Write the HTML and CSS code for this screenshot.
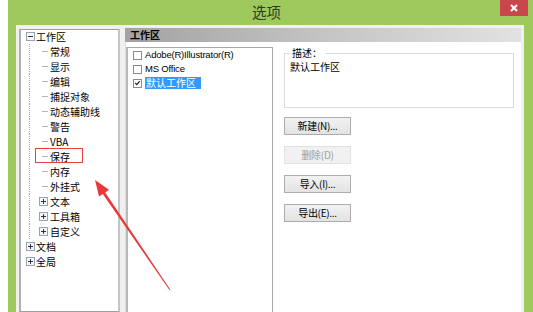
FILE: index.html
```html
<!DOCTYPE html>
<html>
<head>
<meta charset="utf-8">
<link rel="stylesheet" href="styles.css">
</head>
<body>
<div class="win">
  <div class="titlebar">
    <div class="title">选项</div>
    <div class="close"><svg width="10" height="10" viewBox="0 0 10 10"><path d="M2 2L8 8M8 2L2 8" stroke="#fff" stroke-width="2"/></svg></div>
  </div>
  <div class="content">
    <div class="tree">
      <div class="row root first"><span class="exp"><svg width="9" height="9" viewBox="0 0 9 9"><rect x="0.5" y="0.5" width="8" height="8" fill="#f4f6f9" stroke="#98a4b4"/><path d="M2 4.5H7" stroke="#333"/></svg></span><span class="t">工作区</span></div>
      <div class="row child"><span class="v"></span><span class="dash"></span><span class="t">常规</span></div>
      <div class="row child"><span class="v"></span><span class="dash"></span><span class="t">显示</span></div>
      <div class="row child"><span class="v"></span><span class="dash"></span><span class="t">编辑</span></div>
      <div class="row child"><span class="v"></span><span class="dash"></span><span class="t">捕捉对象</span></div>
      <div class="row child"><span class="v"></span><span class="dash"></span><span class="t">动态辅助线</span></div>
      <div class="row child"><span class="v"></span><span class="dash"></span><span class="t">警告</span></div>
      <div class="row child"><span class="v"></span><span class="dash"></span><span class="t">VBA</span></div>
      <div class="row child"><span class="v"></span><span class="dash"></span><span class="t">保存</span></div>
      <div class="row child"><span class="v"></span><span class="dash"></span><span class="t">内存</span></div>
      <div class="row child"><span class="v"></span><span class="dash"></span><span class="t">外挂式</span></div>
      <div class="row child"><span class="v"></span><span class="exp sub"><svg width="9" height="9" viewBox="0 0 9 9"><rect x="0.5" y="0.5" width="8" height="8" fill="#f4f6f9" stroke="#98a4b4"/><path d="M2 4.5H7M4.5 2V7" stroke="#333"/></svg></span><span class="t">文本</span></div>
      <div class="row child"><span class="v"></span><span class="exp sub"><svg width="9" height="9" viewBox="0 0 9 9"><rect x="0.5" y="0.5" width="8" height="8" fill="#f4f6f9" stroke="#98a4b4"/><path d="M2 4.5H7M4.5 2V7" stroke="#333"/></svg></span><span class="t">工具箱</span></div>
      <div class="row child"><span class="v"></span><span class="exp sub"><svg width="9" height="9" viewBox="0 0 9 9"><rect x="0.5" y="0.5" width="8" height="8" fill="#f4f6f9" stroke="#98a4b4"/><path d="M2 4.5H7M4.5 2V7" stroke="#333"/></svg></span><span class="t">自定义</span></div>
      <div class="row root"><span class="exp"><svg width="9" height="9" viewBox="0 0 9 9"><rect x="0.5" y="0.5" width="8" height="8" fill="#f4f6f9" stroke="#98a4b4"/><path d="M2 4.5H7M4.5 2V7" stroke="#333"/></svg></span><span class="t">文档</span></div>
      <div class="row root"><span class="exp"><svg width="9" height="9" viewBox="0 0 9 9"><rect x="0.5" y="0.5" width="8" height="8" fill="#f4f6f9" stroke="#98a4b4"/><path d="M2 4.5H7M4.5 2V7" stroke="#333"/></svg></span><span class="t">全局</span></div>
    </div>
    <div class="panel">
      <div class="phead">工作区</div>
      <div class="pbody">
        <div class="listbox">
          <div class="item"><span class="cb"></span><span class="lt">Adobe(R)Illustrator(R)</span></div>
          <div class="item"><span class="cb"></span><span class="lt">MS Office</span></div>
          <div class="item"><span class="cb"><svg width="8" height="8" viewBox="0 0 8 8"><path d="M1.5 4L3.2 5.8L6.5 1.8" stroke="#222" stroke-width="1.4" fill="none"/></svg></span><span class="lt sel">默认工作区</span></div>
        </div>
        <div class="side">
          <fieldset class="desc">
            <legend>描述：</legend>
            <div class="dtext">默认工作区</div>
          </fieldset>
          <div class="btns">
            <div class="btn">新建(N)...</div>
            <div class="btn off">删除(D)</div>
            <div class="btn">导入(I)...</div>
            <div class="btn">导出(E)...</div>
          </div>
        </div>
      </div>
    </div>
  </div>
</div>
<div class="mark"></div>
<svg class="arrow" width="533" height="312" viewBox="0 0 533 312"><polygon points="95,180 109,189.8 105.2,192.4 170.4,289.7 169.6,290.3 102.8,194.1 99,196.6" fill="#e8393a"/></svg>
</body>
</html>
```
FILE: styles.css
```css
html, body {
  margin: 0;
  padding: 0;
}
body {
  width: 533px;
  height: 312px;
  overflow: hidden;
  background: #fff;
  position: relative;
  font-family: "Noto Sans CJK SC", "Liberation Sans", sans-serif;
  font-size: 10px;
  color: #000;
}
.win {
  margin-left: 8px;
  width: 525px;
  height: 312px;
  background: #9dc95d;
  display: flex;
  flex-direction: column;
}
.titlebar {
  height: 25px;
  display: flex;
  align-items: flex-start;
  flex: none;
}
.title {
  flex: 1;
  text-align: center;
  padding-left: 25px;
  font-size: 14.5px;
  line-height: 24px;
  color: #2f3a26;
}
.close {
  width: 28px;
  height: 16px;
  margin-right: 5px;
  background: #c9474b;
  display: flex;
  align-items: center;
  justify-content: center;
}
.content {
  flex: 1;
  margin: 0 9px 0 8px;
  background: #f0f0f0;
  display: flex;
  gap: 5px;
  padding: 3px 3px 0 3px;
  min-height: 0;
}
.tree {
  width: 97px;
  flex: none;
  background: #fff;
  border: 1px solid #a0a0a0;
  border-left: 2px solid #b0b0b0;
  border-right: 2px solid #c4c4c4;
  padding-top: 0;
  margin-top: 1px;
}
.row {
  display: flex;
  align-items: center;
  height: 15px;
  white-space: nowrap;
}
.row.first {
  height: 13px;
  margin-bottom: 1px;
}
.row .t {
  line-height: 13px;
}
.root .exp {
  margin-left: 5px;
  margin-right: 1px;
  display: flex;
}
.v {
  width: 8px;
  height: 15px;
  border-right: 1px dotted #a8a8a8;
  flex: none;
}
.dash {
  width: 6px;
  margin-left: 12px;
  margin-right: 2px;
  border-top: 1px solid #b4b4b4;
  flex: none;
}
.exp.sub {
  margin-left: 9px;
  margin-right: 2px;
  display: flex;
}
.panel {
  flex: 1;
  display: flex;
  flex-direction: column;
}
.phead {
  height: 14px;
  line-height: 14px;
  background: linear-gradient(to right, #a2a2a2, #c4c4c4 50%, #e2e2e2);
  font-weight: bold;
  padding-left: 5px;
  flex: none;
}
.pbody {
  flex: 1;
  background: #fff;
  display: flex;
  padding-top: 5px;
  border-left: 1px solid #e0e0e0;
}
.listbox {
  width: 144px;
  flex: none;
  border: 1px solid #a8a8a8;
  border-left: 2px solid #b8b8b8;
  border-bottom: none;
  padding-top: 0;
}
.item {
  display: flex;
  align-items: center;
  height: 14px;
  white-space: nowrap;
}
.cb {
  width: 7px;
  height: 7px;
  border: 1px solid #8a8a8a;
  background: #fff;
  margin-left: 5px;
  margin-right: 3px;
  display: flex;
  align-items: center;
  justify-content: center;
  flex: none;
}
.cb svg {
  display: block;
}
.lt {
  font-family: "Liberation Sans", "Noto Sans CJK SC", sans-serif;
  font-size: 9.5px;
  letter-spacing: -0.2px;
  line-height: 12px;
}
.lt.sel {
  font-family: "Noto Sans CJK SC", sans-serif;
  font-size: 10px;
  letter-spacing: 0;
  background: #3399ff;
  color: #fff;
  padding: 0 5px 0 1px;
}
.side {
  margin-left: 11px;
  margin-right: 7px;
  flex: 1;
  display: flex;
  flex-direction: column;
}
.desc {
  margin: 0;
  margin-top: 1px;
  padding: 0 0 0 5px;
  border: 1px solid #dcdcdc;
  height: 58px;
  min-width: 0;
}
.desc legend {
  padding: 0 3px 0 2px;
  margin-left: 0;
  line-height: 10px;
  font-size: 10px;
}
.dtext {
  line-height: 12px;
  margin-top: 3px;
}
.btns {
  display: flex;
  flex-direction: column;
  gap: 11px;
  margin-top: 9px;
}
.btn {
  width: 65px;
  height: 16px;
  line-height: 16px;
  text-align: center;
  border: 1px solid #acacac;
  background: linear-gradient(#f2f2f2, #e3e3e3);
  font-size: 10px;
  letter-spacing: -0.3px;
}
.btn.off {
  color: #a0a0a0;
  background: #f1f1f1;
  border-color: #e2e2e2;
}
.mark {
  position: absolute;
  left: 35px;
  top: 148px;
  width: 46px;
  height: 13px;
  border: 1.5px solid #e84040;
}
.arrow {
  position: absolute;
  left: 0;
  top: 0;
}
```
